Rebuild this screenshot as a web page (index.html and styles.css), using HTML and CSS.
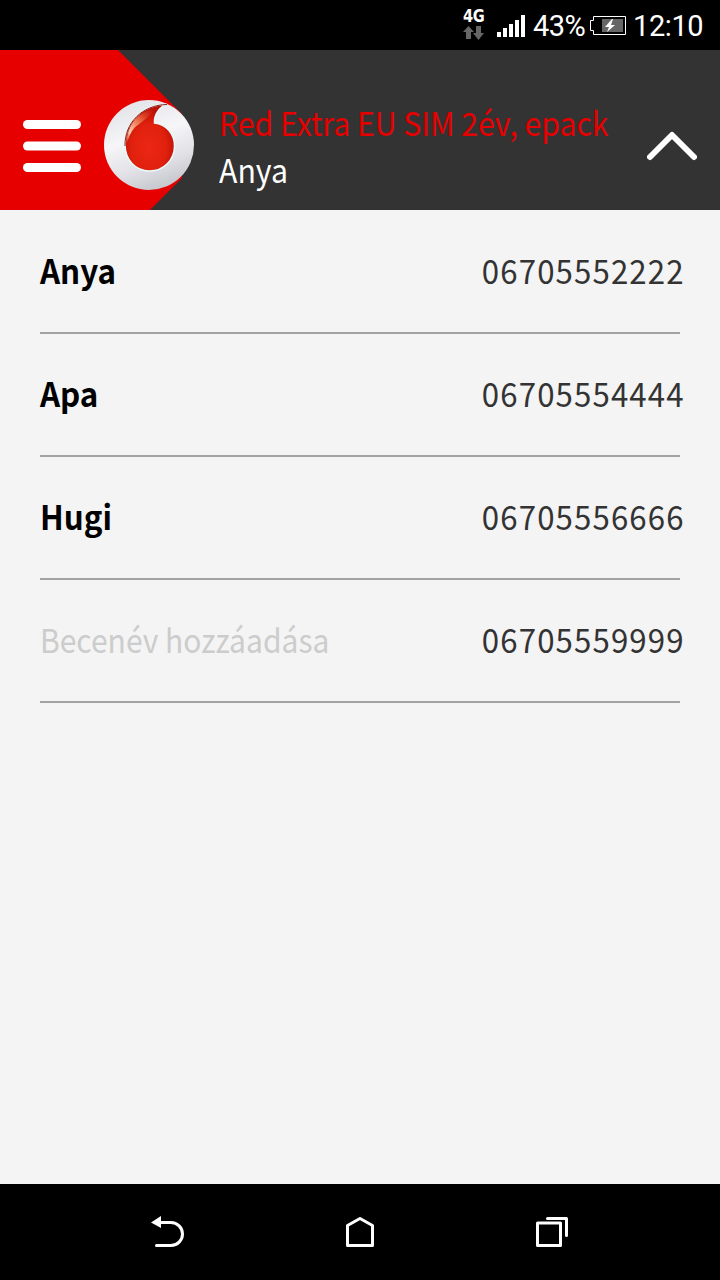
FILE: index.html
```html
<!DOCTYPE html>
<html lang="hu">
<head>
<meta charset="utf-8">
<title>Red Extra</title>
<link rel="stylesheet" href="styles.css">
</head>
<body>
<div class="screen">
  <div class="status">
    <div class="network">
      <span class="network-label">4G</span>
      <svg width="22" height="16" viewBox="0 0 22 16">
        <path fill="#666" d="M5.500 1 11 7H8v7H3V7H0zM13 1h5v7h3l-5.500 7L10 8h3z"/>
      </svg>
    </div>
    <svg class="signal" width="28" height="22" viewBox="0 0 28 22" fill="#fff">
      <path d="M0 17h4v5H0zM6 13h4v9H6zM12 9h4v13h-4zM18 5h4v17h-4zM24 0h4v22h-4z"/>
    </svg>
    <span class="percent">43%</span>
    <svg class="battery" width="36" height="20" viewBox="0 0 36 20">
      <path fill="none" stroke="#fff" d="M3.500.5h32v18h-32v-4h-3v-10h3z"/>
      <path fill="#666" d="M12 3h21v13H12z"/>
      <path fill="#fff" d="m22 3-7 8h4l-2 5 8-7h-4l2-6z"/>
    </svg>
    <span class="clock">12:10</span>
  </div>
  <header class="header">
    <svg class="brand" width="200" height="160" viewBox="0 0 200 160">
      <defs>
        <linearGradient id="pearl" x1=".3" y1="0" x2=".65" y2="1">
          <stop offset="0" stop-color="#e2e3e8"/><stop offset=".4" stop-color="#f6f6f8"/><stop offset=".7" stop-color="#e2e2e7"/><stop offset="1" stop-color="#c4c5cc"/>
        </linearGradient>
        <radialGradient id="drop" cx=".48" cy=".65" r=".55">
          <stop offset="0" stop-color="#ec2614"/><stop offset=".65" stop-color="#e0210e"/><stop offset="1" stop-color="#bd1005"/>
        </radialGradient>
        <linearGradient id="shine" x1=".9" y1="0" x2=".1" y2="1">
          <stop offset="0" stop-color="#e33d20" stop-opacity="0"/><stop offset=".5" stop-color="#ee7c55"/><stop offset=".8" stop-color="#f9cdb0"/><stop offset="1" stop-color="#f3a080" stop-opacity=".3"/>
        </linearGradient>
      </defs>
      <path fill="#e60000" d="M0 0h118l64 64v64l-32 32H0z"/>
      <g fill="#fff"><rect x="23" y="70" width="58" height="9" rx="4.500"/><rect x="23" y="91.500" width="58" height="9" rx="4.500"/><rect x="23" y="113" width="58" height="9" rx="4.500"/></g>
      <circle cx="149" cy="95" r="45" fill="url(#pearl)"/>
      <path fill="url(#drop)" stroke="#e9fafa" stroke-width="1.500" d="M167 54.500C159 57 154 65 154.500 73 166 74 174.500 84 174.500 96c0 14-11 25-25 25s-24.500-11-24.500-27c0-22 18-40 42-39.500z"/>
      <path fill="none" stroke="#8e1e16" d="M125 96c-.5-23 17-41 42-41.500"/>
      <path fill="url(#shine)" d="M156 58c-16 3-29 15-29.500 36 3-8 5-14 10-18 7-5 12-9 19.500-18z"/>
    </svg>
    <div class="titles">
      <div class="plan">Red Extra EU SIM 2év, epack</div>
      <div class="owner">Anya</div>
    </div>
    <svg class="chevron" width="50" height="30" viewBox="0 0 50 30"><path fill="none" stroke="#fff" stroke-width="6" stroke-linecap="round" stroke-linejoin="round" d="m3 26 22-22 22 22"/></svg>
  </header>
  <main class="list">
    <div class="row"><b class="name">Anya</b><span class="number">06705552222</span></div>
    <div class="row"><b class="name">Apa</b><span class="number">06705554444</span></div>
    <div class="row"><b class="name">Hugi</b><span class="number">06705556666</span></div>
    <div class="row"><span class="hint">Becenév hozzáadása</span><span class="number">06705559999</span></div>
  </main>
  <nav class="nav">
    <svg width="36" height="36" viewBox="0 0 36 36"><path fill="none" stroke="#fff" stroke-width="3" stroke-linecap="round" d="M9 7.500h12a11.500 11.500 0 0 1 0 23H6.500"/><path fill="#fff" d="M1 7.500 11 1v12z"/></svg>
    <svg width="36" height="36" viewBox="0 0 36 36"><path fill="none" stroke="#fff" stroke-width="3" stroke-linejoin="round" d="M5.500 10.500 18 3.500l12.500 7v20h-25z"/></svg>
    <svg width="36" height="36" viewBox="0 0 36 36"><path fill="none" stroke="#fff" stroke-width="3" stroke-linejoin="round" stroke-linecap="round" d="M3.500 8h23v22.500h-23zM13.500 3.500h19v17"/></svg>
  </nav>
</div>
</body>
</html>
```

FILE: styles.css
```css
* { box-sizing: border-box; }
body { margin: 0; background: #000; }
svg { display: block; flex: none; }
.screen {
  width: 720px;
  height: 1280px;
  display: flex;
  flex-direction: column;
  font-family: "Noto Sans CJK SC", "Noto Sans", sans-serif;
  background: #f4f4f4;
  white-space: nowrap;
}
.status {
  height: 50px;
  flex: none;
  display: flex;
  align-items: flex-start;
  padding: 10px 16px 0 463px;
  background: #000;
  color: #fff;
  font: 29px/32px Roboto, sans-serif;
}
.network { width: 22px; margin-top: -3px; }
.network-label {
  display: block;
  height: 18px;
  font: bold 17px/19px "DejaVu Sans", sans-serif;
  letter-spacing: -.5px;
  transform: scaleX(.86);
  transform-origin: left;
}
.signal { margin: 5px 0 0 12px; }
.percent { width: 53px; margin-left: 8px; letter-spacing: -.5px; }
.battery { margin: 6px 0 0 4px; }
.clock { margin-left: 7px; letter-spacing: -.4px; }
.header {
  height: 160px;
  flex: none;
  display: flex;
  align-items: flex-start;
  background: #333;
}
.titles { width: 428px; padding: 48px 0 0 19px; font-size: 32.5px; line-height: 47px; }
.plan { color: #e60000; transform: scaleX(.928); transform-origin: left; }
.owner { color: #fff; transform: scaleX(.93); transform-origin: left; }
.chevron { margin: 81px 0 0 19px; }
.list { flex: 1; padding: 1px 40px 0; }
.row {
  height: 123px;
  display: flex;
  justify-content: space-between;
  align-items: center;
  padding-bottom: 4px;
  border-bottom: 2px solid #a2a2a2;
  font-size: 33px;
  line-height: 48px;
}
.name { color: #000; transform: scaleX(.95); transform-origin: left; }
.number {
  margin-right: -5px;
  color: #333;
  letter-spacing: 1.2px;
  transform: scaleX(.945);
  transform-origin: right;
}
.hint { color: #ccc; transform: scaleX(.91); transform-origin: left; }
.nav {
  height: 96px;
  flex: none;
  display: flex;
  justify-content: space-between;
  align-items: center;
  padding: 2px 150px 0;
  background: #000;
}
```
